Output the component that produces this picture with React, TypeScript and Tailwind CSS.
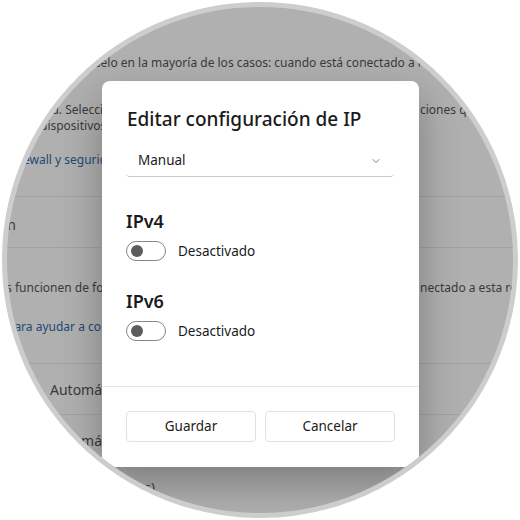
import { ChevronDown } from "lucide-react"

const font = { fontFamily: '"Noto Sans", "Open Sans", sans-serif' }

const Toggle = () => (
  <div className="w-10 h-5 rounded-full border border-[#858585] flex items-center pl-[4px] shrink-0">
    <div className="w-3 h-3 rounded-full bg-[#5c5c5c]" />
  </div>
)

const ToggleRow = ({ title }: { title: string }) => (
  <div className="flex flex-col">
    <h2 className="text-[18px] leading-6 font-semibold text-[#1b1b1b]">{title}</h2>
    <div className="flex items-center gap-3 mt-2">
      <Toggle />
      <span className="text-[13.5px] leading-5 text-[#1b1b1b]">Desactivado</span>
    </div>
  </div>
)

const Dialog = () => (
  <div className="absolute left-[95px] top-[74px] w-[317px] h-[386px] bg-white rounded-lg flex flex-col shadow-[0_16px_40px_rgba(0,0,0,0.3)]">
    <div className="flex flex-col px-6 pt-6 h-[305px]">
      <h1 className="text-[19px] leading-7 font-medium text-[#1b1b1b] pl-px">Editar configuración de IP</h1>
      <div className="mt-3 h-8 mr-[1px] rounded border-b border-[#c9c9c9] flex items-center justify-between pl-3 pr-3">
        <span className="text-[13.5px] text-[#1b1b1b]">Manual</span>
        <ChevronDown className="w-3 h-3 text-[#555]" strokeWidth={1.5} />
      </div>
      <div className="mt-[32px]">
        <ToggleRow title="IPv4" />
      </div>
      <div className="mt-[28px]">
        <ToggleRow title="IPv6" />
      </div>
    </div>
    <div className="border-t border-[#e5e5e5] px-6 pt-6 grid grid-cols-2 gap-[9px]">
      <button className="h-[31px] rounded border border-[#e0e0e0] bg-white text-[13.5px] text-[#1b1b1b]">Guardar</button>
      <button className="h-[31px] rounded border border-[#e0e0e0] bg-white text-[13.5px] text-[#1b1b1b]">Cancelar</button>
    </div>
  </div>
)

const Line = ({ left, right, ml, link }: { left: string; right?: string; ml: string; link?: boolean }) => (
  <div className={`flex h-4 leading-4 whitespace-nowrap ${link ? "text-[#1c4a76]" : "text-[#3a3a3a]"}`}>
    <div className="w-[413px] shrink-0 overflow-hidden">
      <span className={`inline-block ${ml}`}>{left}</span>
    </div>
    {right && <span>{right}</span>}
  </div>
)

export default function App() {
  return (
    <div className="w-[520px] h-[520px] bg-white" style={font}>
      <div className="relative w-[516px] h-[516px] m-[2px] rounded-full overflow-hidden border-[5px] border-[#cdcdcd] bg-[#b0b0b0]">
        <div className="flex flex-col text-[12px]">
          <div className="flex flex-col border-b border-[#a2a2a2] pb-[28px]">
            <div className="mt-[48px]">
              <Line ml="ml-[79px]" left="Úselo en la mayoría de los casos: cuando está conectado a una red en casa" />
            </div>
            <div className="mt-[31px]">
              <Line ml="ml-[33px]" left="red. Seleccione esta opción si necesita compartir" right="ciones que se comunican" />
              <Line ml="ml-[33px]" left="dispositivos de la red y confía en ellos." />
            </div>
            <div className="mt-[18px]">
              <Line ml="ml-[2px]" link left="Firewall y seguridad de red" />
            </div>
          </div>
          <div className="h-[51px] flex items-center pt-1 border-b border-[#a2a2a2] text-[14px] text-[#3a3a3a] whitespace-nowrap">
            <span className="-ml-[72px]">Información</span>
          </div>
          <div className="flex flex-col pt-[32px] pb-[28px] border-b border-[#a2a2a2]">
            <Line ml="-ml-[64px]" left="aplicaciones funcionen de forma correcta cuando" right="nectado a esta red" />
            <div className="mt-[23px]">
              <Line ml="ml-0" link left="para ayudar a configurar" />
            </div>
          </div>
          <div className="h-[51px] flex items-center border-b border-[#a2a2a2] text-[14px] text-[#3a3a3a]">
            <span className="pl-[43px]">Automático (DHCP)</span>
          </div>
          <div className="h-[51px] flex items-center text-[14px] text-[#3a3a3a]">
            <span className="pl-[43px]">Automático (DHCP)</span>
          </div>
          <div className="mt-[13px] h-4 leading-4 text-[13px] text-[#3a3a3a]">
            <span className="pl-[106px]">(redes)</span>
          </div>
        </div>
        <Dialog />
      </div>
    </div>
  )
}
